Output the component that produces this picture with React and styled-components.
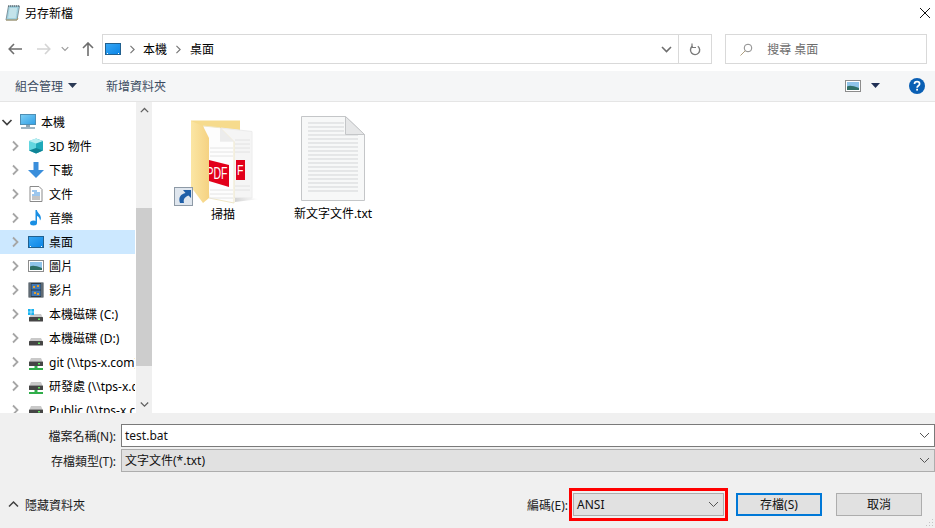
import React from "react";
import styled, { createGlobalStyle } from "styled-components";

const GlobalStyle = createGlobalStyle`
  html, body {
    margin: 0;
    padding: 0;
    background: #fff;
  }
  * {
    box-sizing: border-box;
  }
  svg {
    flex: none;
    display: block;
  }
`;

const Dialog = styled.div`
  width: 935px;
  height: 528px;
  display: flex;
  flex-direction: column;
  overflow: hidden;
  background: #fff;
  color: #000;
  font-family: "Noto Sans", "Noto Sans CJK TC", sans-serif;
  font-size: 12px;
`;

const TitleBar = styled.div`
  height: 28px;
  flex: none;
  display: flex;
  align-items: center;
  padding: 0 4px 3px 5px;
  gap: 4px;
`;

const TitleText = styled.span`
  flex: 1;
`;

const NavBar = styled.div`
  height: 43px;
  flex: none;
  display: flex;
  align-items: center;
  padding: 0 8px 1px 5px;
`;

const NavButton = styled.div`
  width: ${(p) => p.$w || 29}px;
  height: 29px;
  margin-left: ${(p) => p.$ml || 0}px;
  display: flex;
  align-items: center;
  justify-content: center;
  flex: none;
`;

const AddressBox = styled.div`
  width: 611px;
  height: 30px;
  margin-left: -2px;
  border: 1px solid #d9d9d9;
  display: flex;
  align-items: center;
  padding-left: 2px;
`;

const Crumb = styled.span`
  margin: 0 0 1px 0;
  white-space: nowrap;
`;

const CrumbSep = styled.div`
  width: ${(p) => p.$w}px;
  display: flex;
  justify-content: center;
`;

const AddressSpacer = styled.div`
  flex: 1;
`;

const AddressDrop = styled.div`
  width: 31px;
  height: 100%;
  display: flex;
  align-items: center;
  justify-content: center;
  padding-left: 6px;
  border-right: 1px solid #d9d9d9;
`;

const RefreshButton = styled.div`
  width: 32px;
  display: flex;
  justify-content: center;
`;

const SearchBox = styled.div`
  width: 202px;
  height: 30px;
  margin-left: 13px;
  border: 1px solid #d9d9d9;
  display: flex;
  align-items: center;
  padding-left: 14px;
  gap: 14px;
  color: #6d6d6d;
`;

const ToolBar = styled.div`
  height: 31px;
  flex: none;
  background: #f5f6f7;
  border-bottom: 1px solid #e5e5e5;
  display: flex;
  align-items: center;
  padding: 0 10px 1px 15px;
  color: #3a4a60;
`;

const ToolLabel = styled.span`
  margin: 0 ${(p) => p.$mr || 0}px 0 ${(p) => p.$ml || 0}px;
  white-space: nowrap;
`;

const ToolSpacer = styled.div`
  flex: 1;
`;

const ViewCaret = styled.div`
  display: flex;
  margin: 0 29px 0 10px;
`;

const Main = styled.div`
  height: 311px;
  flex: none;
  display: flex;
`;

const Sidebar = styled.div`
  width: 136px;
  flex: none;
  overflow: hidden;
  padding-top: 8px;
`;

const TreeRow = styled.div`
  width: 135px;
  height: 24px;
  display: flex;
  align-items: center;
  padding-left: ${(p) => p.$level * 8}px;
  background: ${(p) => (p.$selected ? "#cce8ff" : "transparent")};
  white-space: nowrap;
  overflow: hidden;
`;

const TreeChevron = styled.div`
  width: 20px;
  flex: none;
  display: flex;
`;

const TreeLabel = styled.span`
  margin-left: 5px;
`;

const Scrollbar = styled.div`
  width: 16px;
  flex: none;
  background: #f0f0f0;
  display: flex;
  flex-direction: column;
`;

const ScrollArrow = styled.div`
  height: 17px;
  flex: none;
  display: flex;
  align-items: center;
  justify-content: center;
`;

const ScrollTrack = styled.div`
  flex: 1;
  padding-top: 89px;
  padding-bottom: 30px;
  display: flex;
`;

const ScrollThumb = styled.div`
  flex: 1;
  background: #cdcdcd;
`;

const FileArea = styled.div`
  flex: 1;
  display: flex;
  align-items: flex-start;
  padding: 12px 0 0 16px;
`;

const FileTile = styled.div`
  width: 110px;
  display: flex;
  flex-direction: column;
  align-items: center;
  padding-top: ${(p) => p.$pt || 0}px;
`;

const FileName = styled.span`
  margin-top: ${(p) => p.$mt}px;
  white-space: nowrap;
`;

const BottomPanel = styled.div`
  flex: 1;
  background: #f0f0f0;
  padding-top: 11px;
  display: flex;
  flex-direction: column;
  position: relative;
`;

const FormGrid = styled.div`
  display: grid;
  grid-template-columns: 116px 1fr;
  column-gap: 5px;
  row-gap: 2px;
  align-items: center;
`;

const FormLabel = styled.label`
  text-align: right;
  white-space: nowrap;
  color: #1a1a1a;
`;

const Field = styled.div`
  height: 23px;
  display: flex;
  align-items: center;
  justify-content: space-between;
  padding: 0 4px 1px 3px;
  background: ${(p) => (p.$input ? "#fff" : "#e1e1e1")};
  border: 1px solid ${(p) => (p.$input ? "#7a7a7a" : "#adadad")};
  color: #111;
  white-space: nowrap;
`;

const Footer = styled.div`
  display: flex;
  align-items: center;
  margin-top: 16px;
  padding: 0 13px 0 8px;
`;

const ToggleFolders = styled.div`
  display: flex;
  align-items: center;
  gap: 6px;
  flex: 1;
  color: #1a1a1a;
`;

const EncodingLabel = styled.label`
  margin-right: 1px;
  white-space: nowrap;
  color: #1a1a1a;
`;

const Highlight = styled.div`
  width: 159px;
  height: 33px;
  border: 3px solid #f00;
  padding: 2px 1px;
  margin-right: 8px;
`;

const Button = styled.div`
  width: 86px;
  height: 23px;
  display: flex;
  align-items: center;
  justify-content: center;
  background: #e1e1e1;
  border: ${(p) => (p.$primary ? "2px solid #0078d7" : "1px solid #adadad")};
  margin-left: ${(p) => p.$ml || 0}px;
  padding-bottom: 1px;
  color: #111;
`;

const ResizeGrip = styled.svg`
  position: absolute;
  right: 1px;
  bottom: 1px;
`;

const Caret = ({ color = "#2b3a55" }) => (
  <svg width="9" height="5" viewBox="0 0 9 5">
    <path d="M0 0h9L4.500 5z" fill={color} />
  </svg>
);

const SmallChevron = ({ dir = "down", color = "#555", w = 11, sw = 1 }) => {
  const d = {
    down: "M1 3l4.500 4.500L10 3",
    up: "M1 7.500L5.500 3 10 7.500",
    right: "M3 1l4.500 4.500L3 10",
  }[dir];
  return (
    <svg width={w} height={w} viewBox="0 0 11 11">
      <path d={d} fill="none" stroke={color} strokeWidth={sw} />
    </svg>
  );
};

const TreeArrow = ({ open }) => (
  <svg width="14" height="14" viewBox="0 0 14 14">
    {open ? (
      <path d="M2.500 5l4.500 4.500L11.500 5" fill="none" stroke="#404040" strokeWidth="1.700" />
    ) : (
      <path d="M5 2.500L9.500 7 5 11.500" fill="none" stroke="#a6a6a6" strokeWidth="1.800" />
    )}
  </svg>
);

const DesktopIcon = () => (
  <svg width="16" height="16" viewBox="0 0 16 16">
    <defs>
      <linearGradient id="desk" x1="0" y1="0" x2="1" y2="1">
        <stop offset="0" stopColor="#38a8f5" />
        <stop offset="1" stopColor="#0a84e6" />
      </linearGradient>
    </defs>
    <rect x="0.500" y="2.500" width="15" height="11" fill="url(#desk)" stroke="#21608f" />
    <path d="M2 12.500h1M13 12.500h1" stroke="#fff" />
  </svg>
);

const ComputerIcon = () => (
  <svg width="16" height="16" viewBox="0 0 16 16">
    <defs>
      <linearGradient id="screen" x1="0" y1="0" x2="1" y2="1">
        <stop offset="0" stopColor="#7fd0f5" />
        <stop offset="1" stopColor="#2f9fe6" />
      </linearGradient>
    </defs>
    <rect x="0.500" y="0.500" width="15" height="10" fill="url(#screen)" stroke="#4f8fb4" />
    <rect x="6" y="11" width="4" height="2" fill="#8fa6b4" />
    <rect x="1" y="13" width="14" height="2" fill="#9db4c2" />
  </svg>
);

const CubeIcon = () => (
  <svg width="16" height="16" viewBox="0 0 16 16">
    <path d="M8 0.500l7 2.500v9.500l-7 3z" fill="#1fa9ba" />
    <path d="M8 0.500L1 3v9.500l7 3z" fill="#62d6e0" />
    <path d="M1 3l7-2.500L15 3 8 5.500z" fill="#b8eef2" />
    <path d="M8 10l7 2.500-7 3-7-3z" fill="#0f8496" />
  </svg>
);

const DownloadIcon = () => (
  <svg width="16" height="16" viewBox="0 0 16 16">
    <path d="M5.500 0h5v8H16l-8 8-8-8h5.500z" fill="#3a8edb" />
  </svg>
);

const DocIcon = () => (
  <svg width="16" height="16" viewBox="0 0 16 16">
    <path d="M2 0.500h9l3 3v12H2z" fill="#fff" stroke="#8a8a8a" />
    <path d="M4 5h5M6 7h6M4 9h8" stroke="#3a8edb" />
    <path d="M4 11h8M4 13h8" stroke="#8a8a8a" />
  </svg>
);

const MusicIcon = () => (
  <svg width="16" height="16" viewBox="0 0 16 16">
    <ellipse cx="5.500" cy="13" rx="3.500" ry="2.500" fill="#1a8fe3" />
    <path d="M7.500 13V0h1.400c.3 3 4 4 4 8 0 1.200-.4 2-.9 2.600.1-2.500-1.600-4-3-4.600V13z" fill="#1a8fe3" />
  </svg>
);

const PictureIcon = () => (
  <svg width="16" height="16" viewBox="0 0 16 16">
    <rect x="0.500" y="2.500" width="15" height="11" fill="#fff" stroke="#8c8c8c" />
    <rect x="2" y="4" width="12" height="8" fill="#8fc4ea" />
    <path d="M2 8.500c3-1.500 6-.5 12 1.500v2H2z" fill="#2f6f66" />
  </svg>
);

const FilmIcon = () => (
  <svg width="16" height="16" viewBox="0 0 16 16">
    <rect x="0.500" y="0.500" width="15" height="15" fill="#2d3a45" />
    <rect x="3.500" y="2" width="9" height="5.500" fill="#3f78b8" />
    <rect x="3.500" y="8.500" width="9" height="5.500" fill="#3f78b8" />
    <path d="M5 4h2v2H5zM9 3h2v2H9zM6 10h2v2H6zM9 11h2v2H9z" fill="#e0a030" />
    <path d="M2 1.500v13M14 1.500v13" stroke="#fff" strokeDasharray="1 1" />
  </svg>
);

const DriveIcon = ({ windows }) => (
  <svg width="16" height="16" viewBox="0 0 16 16">
    <path d="M1.500 11L3 8h10l1.500 3z" fill="#c9c9c9" />
    <rect x="1" y="11" width="14" height="4.500" rx="0.500" fill="#454545" />
    <rect x="10" y="12.500" width="2" height="1.500" fill="#5fe05f" />
    {windows && (
      <path d="M0 3h2.700v2.700H0zM3.300 3H6v2.700H3.300zM0 6.300h2.700V9H0zM3.300 6.300H6V9H3.300z" fill="#19b3f0" />
    )}
  </svg>
);

const NetDriveIcon = () => (
  <svg width="16" height="16" viewBox="0 0 16 16">
    <path d="M1.500 7.500L3 4h10l1.500 3.500z" fill="#c9c9c9" />
    <rect x="1" y="7.500" width="14" height="4.500" rx="0.500" fill="#454545" />
    <rect x="10" y="9" width="2" height="1.500" fill="#5fe05f" />
    <path d="M6.500 12h3v2H15v2H1v-2h5.500z" fill="#2fae4a" />
  </svg>
);

const NoteIcon = () => (
  <svg width="16" height="16" viewBox="0 0 16 16">
    <path d="M1 15L3.500 1h11L12 15z" fill="#9fd0de" stroke="#7f96a0" />
    <path d="M4.500 4h7.500M4.200 6h7.500M3.900 8h7.500M3.600 10h7.500M3.300 12h7.500" stroke="#e8f6f6" />
    <path d="M3 1h11" stroke="#46525a" strokeDasharray="1 1" />
    <path d="M1 15h11l1-2" fill="none" stroke="#b09a68" />
  </svg>
);

const PdfFolderIcon = () => (
  <svg width="100" height="94" viewBox="0 0 100 94">
    <defs>
      <linearGradient id="flap" x1="0" y1="0" x2="1" y2="0">
        <stop offset="0" stopColor="#fbe6a4" />
        <stop offset="1" stopColor="#f5d282" />
      </linearGradient>
      <linearGradient id="floor" x1="0" y1="0" x2="1" y2="0">
        <stop offset="0" stopColor="#d4d4d4" />
        <stop offset="1" stopColor="#ffffff" />
      </linearGradient>
    </defs>
    <path d="M18 6.500h49v14H18z" fill="#f6db8d" />
    <path d="M62 88l24-3-24-3z" fill="url(#floor)" />
    <path d="M48 14l31 3.500v66.500l-28-1z" fill="#f5f5f5" stroke="#ececec" />
    <path d="M62 26h15M62 30h15M62 34h15M62 38h15M62 72h15M62 76h15" stroke="#e2e2e2" />
    <rect x="63" y="46" width="9" height="20" fill="#e2001a" />
    <text transform="translate(64 61) scale(0.75 1.100)" fontFamily="Liberation Sans, sans-serif" fontSize="14" fill="#fff">F</text>
    <path d="M30 12l17 1.700 14 14V89l-25-5z" fill="#fdfdfd" stroke="#efe7c8" />
    <path d="M47 13.700v14h14z" fill="#ececec" />
    <path d="M37 34h23M37 38h23M37 42h23M37 76h23M37 80h23M37 84h23" stroke="#e4e4e4" />
    <path d="M36 46l20 5v22l-20-6z" fill="#e2001a" />
    <text transform="translate(33.500 65) scale(0.750 1.150)" fontFamily="Liberation Sans, sans-serif" fontSize="14" fill="#fff">PDF</text>
    <path d="M18 7l12 5 6 12v60l-6 5-12-16z" fill="url(#flap)" />
    <rect x="1.500" y="73.500" width="18" height="18" fill="#dfe6ee" stroke="#8e9aa6" />
    <path d="M7 89c-2-6 1-9 5.500-10L10 76h8v8l-2.500-2.500c-3.500 1.500-5.500 3.500-4.500 7.500z" fill="#1f5fa8" />
  </svg>
);

const TextFileIcon = () => (
  <svg width="64" height="85" viewBox="0 0 64 85">
    <path d="M0.500 0.500h44l19 18v66h-63z" fill="#f7f8f8" stroke="#c4c6c8" />
    <path
      d="M7 7h36M7 11h36M7 15h36M7 19h50M7 23h50M7 27h50M7 31h50M7 35h50M7 39h50M7 43h50M7 47h50M7 51h50M7 55h50M7 59h50M7 63h50M7 67h50M7 71h50M7 75h50"
      stroke="#d3d5d7"
    />
    <path d="M44.500 0.500v18h19z" fill="#e6e7e8" stroke="#c4c6c8" />
  </svg>
);

const HelpIcon = () => (
  <svg width="16" height="16" viewBox="0 0 16 16">
    <circle cx="8" cy="8" r="8" fill="#0a5fb4" />
    <path d="M5.500 6c0-1.500 1.100-2.300 2.600-2.300S10.600 4.500 10.600 6c0 1.800-2.500 1.800-2.500 3.700" fill="none" stroke="#fff" strokeWidth="1.700" />
    <rect x="7.200" y="10.800" width="1.800" height="1.800" fill="#fff" />
  </svg>
);

const treeItems = [
  { level: 0, open: true, icon: <ComputerIcon />, label: "本機" },
  { level: 1, icon: <CubeIcon />, label: "3D 物件" },
  { level: 1, icon: <DownloadIcon />, label: "下載" },
  { level: 1, icon: <DocIcon />, label: "文件" },
  { level: 1, icon: <MusicIcon />, label: "音樂" },
  { level: 1, icon: <DesktopIcon />, label: "桌面", selected: true },
  { level: 1, icon: <PictureIcon />, label: "圖片" },
  { level: 1, icon: <FilmIcon />, label: "影片" },
  { level: 1, icon: <DriveIcon windows />, label: "本機磁碟 (C:)" },
  { level: 1, icon: <DriveIcon />, label: "本機磁碟 (D:)" },
  { level: 1, icon: <NetDriveIcon />, label: "git (\\\\tps-x.com)" },
  { level: 1, icon: <NetDriveIcon />, label: "研發處 (\\\\tps-x.com)" },
  { level: 1, icon: <NetDriveIcon />, label: "Public (\\\\tps-x.com)" },
];

export default function App() {
  return (
    <Dialog>
      <GlobalStyle />
      <TitleBar>
        <NoteIcon />
        <TitleText>另存新檔</TitleText>
        <svg width="12" height="12" viewBox="0 0 12 12">
          <path d="M1 1l10 10M11 1L1 11" stroke="#111" />
        </svg>
      </TitleBar>

      <NavBar>
        <NavButton $w={19}>
          <svg width="14" height="12" viewBox="0 0 14 12">
            <path d="M6 1L1.200 6 6 11M1.500 6H14" fill="none" stroke="#6e6e6e" strokeWidth="1.600" />
          </svg>
        </NavButton>
        <NavButton $w={29} $ml={5}>
          <svg width="14" height="12" viewBox="0 0 14 12">
            <path d="M8 1l4.800 5L8 11M12.500 6H0" fill="none" stroke="#d4d4d4" strokeWidth="1.600" />
          </svg>
        </NavButton>
        <NavButton $w={13}>
          <SmallChevron dir="down" color="#9a9a9a" w={8} sw={1.600} />
        </NavButton>
        <NavButton $w={33}>
          <svg width="12" height="14" viewBox="0 0 12 14">
            <path d="M1 6l5-5 5 5M6 1.500V14" fill="none" stroke="#6e6e6e" strokeWidth="1.600" />
          </svg>
        </NavButton>
        <AddressBox>
          <DesktopIcon />
          <CrumbSep $w={22}>
            <SmallChevron dir="right" color="#777" w={9} sw={1.400} />
          </CrumbSep>
          <Crumb>本機</Crumb>
          <CrumbSep $w={23}>
            <SmallChevron dir="right" color="#777" w={9} sw={1.400} />
          </CrumbSep>
          <Crumb>桌面</Crumb>
          <AddressSpacer />
          <AddressDrop>
            <SmallChevron dir="down" color="#6e6e6e" sw={1.600} />
          </AddressDrop>
          <RefreshButton>
            <svg width="12" height="13" viewBox="0 0 12 13">
              <path d="M8.800 3.300A4.600 4.600 0 1 1 3.500 3.200" fill="none" stroke="#7a7a7a" strokeWidth="1.400" />
              <path d="M3 0.500v4h4" fill="none" stroke="#7a7a7a" strokeWidth="1.200" />
            </svg>
          </RefreshButton>
        </AddressBox>
        <SearchBox>
          <svg width="13" height="13" viewBox="0 0 13 13">
            <circle cx="8" cy="5" r="3.800" fill="none" stroke="#8a8a8a" />
            <path d="M5.300 7.700L0.500 12.500" stroke="#b0a080" />
          </svg>
          <span>搜尋 桌面</span>
        </SearchBox>
      </NavBar>

      <ToolBar>
        <ToolLabel $mr={5}>組合管理</ToolLabel>
        <Caret />
        <ToolLabel $ml={29}>新增資料夾</ToolLabel>
        <ToolSpacer />
        <PictureIcon />
        <ViewCaret>
          <Caret color="#1f2f55" />
        </ViewCaret>
        <HelpIcon />
      </ToolBar>

      <Main>
        <Sidebar>
          {treeItems.map((item) => (
            <TreeRow key={item.label} $level={item.level} $selected={item.selected}>
              <TreeChevron>
                <TreeArrow open={item.open} />
              </TreeChevron>
              {item.icon}
              <TreeLabel>{item.label}</TreeLabel>
            </TreeRow>
          ))}
        </Sidebar>
        <Scrollbar>
          <ScrollArrow>
            <SmallChevron dir="up" color="#606060" w={9} sw={1.500} />
          </ScrollArrow>
          <ScrollTrack>
            <ScrollThumb />
          </ScrollTrack>
          <ScrollArrow>
            <SmallChevron dir="down" color="#606060" w={9} sw={1.500} />
          </ScrollArrow>
        </Scrollbar>
        <FileArea>
          <FileTile>
            <PdfFolderIcon />
            <FileName $mt={-3}>掃描</FileName>
          </FileTile>
          <FileTile $pt={2}>
            <TextFileIcon />
            <FileName $mt={3}>新文字文件.txt</FileName>
          </FileTile>
        </FileArea>
      </Main>

      <BottomPanel>
        <FormGrid>
          <FormLabel>檔案名稱(N):</FormLabel>
          <Field $input>
            test.bat
            <SmallChevron dir="down" color="#555" />
          </Field>
          <FormLabel>存檔類型(T):</FormLabel>
          <Field>
            文字文件(*.txt)
            <SmallChevron dir="down" color="#555" />
          </Field>
        </FormGrid>
        <Footer>
          <ToggleFolders>
            <SmallChevron dir="up" color="#404040" sw={1.500} />
            隱藏資料夾
          </ToggleFolders>
          <EncodingLabel>編碼(E):</EncodingLabel>
          <Highlight>
            <Field>
              ANSI
              <SmallChevron dir="down" color="#555" />
            </Field>
          </Highlight>
          <Button $primary>存檔(S)</Button>
          <Button $ml={14}>取消</Button>
        </Footer>
        <ResizeGrip width="10" height="10" viewBox="0 0 10 10">
          <path d="M8 2h1v1H8zM5 5h1v1H5zM8 5h1v1H8zM2 8h1v1H2zM5 8h1v1H5zM8 8h1v1H8z" fill="#c4c4c4" />
        </ResizeGrip>
      </BottomPanel>
    </Dialog>
  );
}
